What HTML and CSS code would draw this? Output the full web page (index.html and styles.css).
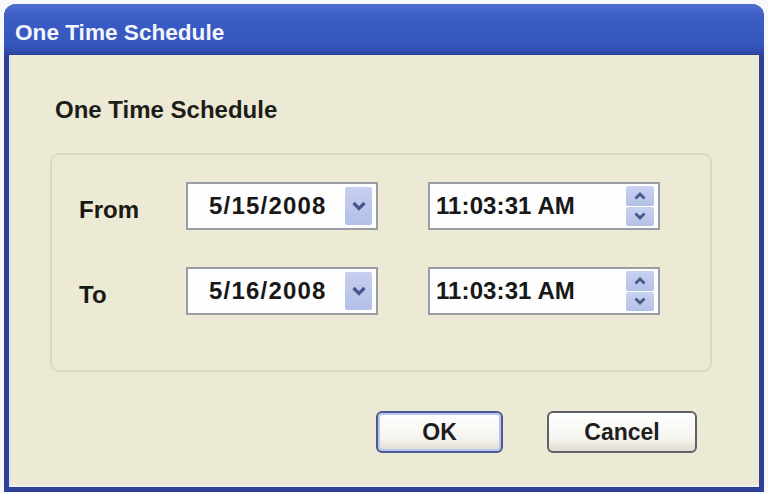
FILE: index.html
```html
<!DOCTYPE html>
<html lang="en">
    <head>
        <meta charset="utf-8">
        <title>One Time Schedule</title>
        <link rel="stylesheet" href="styles.css">
    </head>
    <body>
        <div class="window">
            <div class="titleBar">One Time Schedule</div>
            <div class="client">
                <h1 class="heading">One Time Schedule</h1>
                <div class="groupBox">
                    <div class="row">
                        <span class="label">From</span>
                        <div class="field dateField">
                            <span class="value">5/15/2008</span>
                            <span class="dropButton">
                                <svg class="chevron" viewBox="0 0 16 10"><path d="M2.5 2 L8 7.5 L13.5 2" fill="none" stroke="#45578c" stroke-width="3.2"/></svg>
                            </span>
                        </div>
                        <div class="field timeField">
                            <span class="value">11:03:31 AM</span>
                            <span class="spinButton">
                                <span class="spinHalf"><svg class="spinArrow" viewBox="0 0 14 8"><path d="M2.5 6.5 L7 2 L11.5 6.5" fill="none" stroke="#45578c" stroke-width="2.8"/></svg></span>
                                <span class="spinHalf"><svg class="spinArrow" viewBox="0 0 14 8"><path d="M2.5 1.5 L7 6 L11.5 1.5" fill="none" stroke="#45578c" stroke-width="2.8"/></svg></span>
                            </span>
                        </div>
                    </div>
                    <div class="row">
                        <span class="label">To</span>
                        <div class="field dateField">
                            <span class="value">5/16/2008</span>
                            <span class="dropButton">
                                <svg class="chevron" viewBox="0 0 16 10"><path d="M2.5 2 L8 7.5 L13.5 2" fill="none" stroke="#45578c" stroke-width="3.2"/></svg>
                            </span>
                        </div>
                        <div class="field timeField">
                            <span class="value">11:03:31 AM</span>
                            <span class="spinButton">
                                <span class="spinHalf"><svg class="spinArrow" viewBox="0 0 14 8"><path d="M2.5 6.5 L7 2 L11.5 6.5" fill="none" stroke="#45578c" stroke-width="2.8"/></svg></span>
                                <span class="spinHalf"><svg class="spinArrow" viewBox="0 0 14 8"><path d="M2.5 1.5 L7 6 L11.5 1.5" fill="none" stroke="#45578c" stroke-width="2.8"/></svg></span>
                            </span>
                        </div>
                    </div>
                </div>
                <div class="buttonRow">
                    <button type="button" class="button defaultButton">OK</button>
                    <button type="button" class="button">Cancel</button>
                </div>
            </div>
        </div>
    </body>
</html>
```

FILE: styles.css
```css
* {
    margin: 0;
    padding: 0;
    box-sizing: border-box;
    font-family: 'Liberation Sans', Arial, sans-serif;
}
html{
    background-color: #f7f8fb;
}
body{
    padding: 4px 4px 0 4px;
}
.window{
    width: 760px;
    height: 488px;
    background-color: #2e3f98;
    border-radius: 12px 12px 0 0;
    padding: 0 5px 5px 5px;
    display: flex;
    flex-direction: column;
}
.titleBar{
    height: 51px;
    margin: 0 -5px;
    padding: 16px 0 0 11px;
    border-radius: 12px 12px 0 0;
    background-image: linear-gradient(to bottom, #4d6fd0, #3a5cc4 30%, #3556bd 80%, #2c49a8);
    border-bottom: 1px solid #2a3f92;
    color: #f4f6ff;
    font-size: 22.6px;
    font-weight: bold;
    line-height: 26px;
}
.client{
    flex: 1;
    background-color: #ece9d4;
    border-left: 2px solid #dfe3f0;
    border-bottom: 2px solid #f3f3f3;
    padding: 41px 0 0 39px;
}
.heading{
    font-size: 24px;
    font-weight: bold;
    line-height: 28px;
    color: #1d1d18;
    margin-left: 5px;
}
.groupBox{
    width: 662px;
    height: 219px;
    margin-top: 29px;
    border: 2px solid #dbd8c4;
    border-radius: 9px;
    padding: 27px 0 0 27px;
    display: flex;
    flex-direction: column;
    gap: 37px;
}
.row{
    display: flex;
    align-items: center;
}
.label{
    width: 107px;
    font-size: 24px;
    font-weight: bold;
    color: #1a1a15;
    padding-top: 8px;
}
.field{
    height: 48px;
    background-color: #fdfdfd;
    border: 2px solid #9a9ea4;
    display: flex;
    align-items: center;
    justify-content: space-between;
    padding: 3px 4px 3px 0;
}
.value{
    font-size: 24px;
    font-weight: bold;
    color: #181818;
}
.dateField{
    width: 192px;
}
.dateField .value{
    padding-left: 21px;
    letter-spacing: 1.2px;
}
.timeField{
    width: 232px;
    margin-left: 50px;
}
.timeField .value{
    padding-left: 6px;
    letter-spacing: 0.1px;
}
.dropButton{
    width: 27px;
    height: 38px;
    background-image: linear-gradient(to bottom, #c6d0f0, #b3bfe6);
    border-radius: 2px;
    display: flex;
    align-items: center;
    justify-content: center;
}
.chevron{
    width: 16px;
    height: 10px;
}
.spinButton{
    width: 28px;
    height: 40px;
    display: flex;
    flex-direction: column;
    gap: 1px;
}
.spinHalf{
    flex: 1;
    background-image: linear-gradient(to bottom, #c9d2f0, #b4c0e6);
    border-radius: 2px;
    display: flex;
    align-items: center;
    justify-content: center;
}
.spinArrow{
    width: 14px;
    height: 8px;
}
.buttonRow{
    display: flex;
    gap: 44px;
    margin-top: 39px;
    padding-left: 326px;
}
.button{
    height: 42px;
    width: 150px;
    font-size: 23px;
    font-weight: bold;
    color: #1e1e1e;
    background-image: linear-gradient(to bottom, #ffffff, #f4f3ee 70%, #dedbd2);
    border: 2px solid #5e6166;
    border-radius: 6px;
}
.defaultButton{
    width: 127px;
    border-color: #4b5a92;
    box-shadow: inset 0 0 0 2px #b9c6ee;
}
```
